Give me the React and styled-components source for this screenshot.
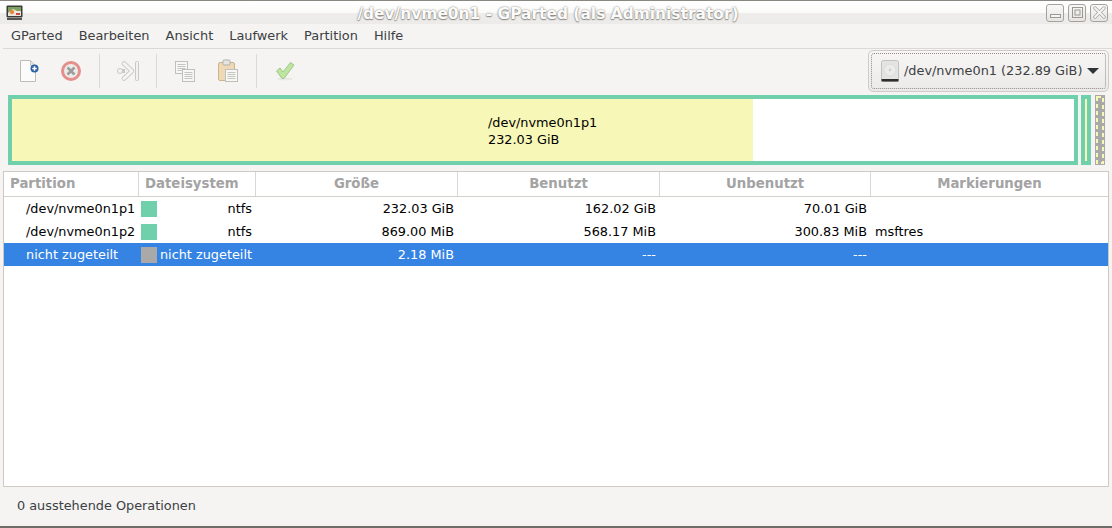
import React from 'react'
import styled, { createGlobalStyle, css } from 'styled-components'

const GlobalStyle = createGlobalStyle`
  html, body { margin:0; padding:0; background:#f5f4f2; }
  body { font-family:"DejaVu Sans", sans-serif; font-size:12.85px; }
`

const MENUS = ['GParted', 'Bearbeiten', 'Ansicht', 'Laufwerk', 'Partition', 'Hilfe']

const HEADERS = [
  { label: 'Partition', align: 'left' },
  { label: 'Dateisystem', align: 'left' },
  { label: 'Größe', align: 'center' },
  { label: 'Benutzt', align: 'center' },
  { label: 'Unbenutzt', align: 'center' },
  { label: 'Markierungen', align: 'center' },
]

const ROWS = [
  { name: '/dev/nvme0n1p1', color: '#70d0ac', fs: 'ntfs', size: '232.03 GiB', used: '162.02 GiB', free: '70.01 GiB', flags: '' },
  { name: '/dev/nvme0n1p2', color: '#70d0ac', fs: 'ntfs', size: '869.00 MiB', used: '568.17 MiB', free: '300.83 MiB', flags: 'msftres' },
  { name: 'nicht zugeteilt', color: '#a9a9a9', fs: 'nicht zugeteilt', size: '2.18 MiB', used: '---', free: '---', flags: '', selected: true },
]

const gridColumns = css`
  display:grid;
  grid-template-columns:135px 117px 202px 202px 211px 1fr;
`

const Window = styled.div`
  width:1112px;
  height:528px;
  box-sizing:border-box;
  border-top:1px solid #8a8680;
  border-bottom:2px solid #6f6c68;
  display:flex;
  flex-direction:column;
  overflow:hidden;
  background:#f5f4f2;
`

const TitleBar = styled.div`
  height:23px;
  flex:none;
  display:flex;
  align-items:center;
  padding:0 4px 0 6px;
  background:linear-gradient(#ffffff 0%, #fbfbfa 50%, #eeedeb 52%, #ecebe9 100%);
`

const Title = styled.div`
  flex:1;
  text-align:center;
  font-weight:bold;
  font-size:15.45px;
  color:#fbfbfb;
  padding:2px 0 0 27px;
  white-space:nowrap;
  text-shadow:0 0 2px #77736d, 0 1px 1px #99958f;
`

const WinButtons = styled.div`
  display:flex;
  gap:4px;
`

const WinButton = styled.div`
  width:18px;
  height:18px;
  box-sizing:border-box;
  border:1px solid #a5a29c;
  border-radius:3px;
  background:linear-gradient(#f8f8f7, #e6e5e2);
  display:flex;
  align-items:center;
  justify-content:center;
`

const MenuBar = styled.div`
  height:24px;
  box-sizing:border-box;
  flex:none;
  display:flex;
  align-items:center;
  padding:0 0 2px 3px;
  color:#3c4043;
  font-size:12.92px;
`

const MenuItem = styled.div`
  padding:0 8px;
`

const Toolbar = styled.div`
  height:43px;
  flex:none;
  margin-left:3px;
  border-top:1px solid #dbd9d5;
  display:flex;
  align-items:center;
  padding-left:5px;
`

const ToolButton = styled.div`
  width:${p => (p.$wide ? 43 : 42)}px;
  height:42px;
  display:flex;
  align-items:center;
  justify-content:center;
`

const Separator = styled.div`
  width:1px;
  height:34px;
  margin:0 7px;
  background:#dcdad6;
`

const DiskSelect = styled.div`
  margin-left:auto;
  margin-right:3px;
  width:241px;
  height:42px;
  box-sizing:border-box;
  border:1px solid #cfccc7;
  border-radius:5px;
  background:linear-gradient(#f7f6f5, #ebeae8);
  padding:2px;
`

const DiskSelectInner = styled.div`
  height:100%;
  box-sizing:border-box;
  border:1px dotted #8f8c87;
  border-radius:3px;
  display:flex;
  align-items:center;
  padding:0 7px 0 9px;
  gap:5px;
  color:#3c4043;
  white-space:nowrap;
`

const Arrow = styled.div`
  margin-left:auto;
  width:0;
  height:0;
  border-left:6px solid transparent;
  border-right:6px solid transparent;
  border-top:6px solid #2e3436;
`

const DiskMap = styled.div`
  height:70px;
  flex:none;
  margin:3px 7px 0 8px;
  display:flex;
  gap:3px;
`

const MapPartition = styled.div`
  box-sizing:border-box;
  height:100%;
  width:${p => p.$width}px;
  border:4px solid #70d0ac;
  background:#fff;
  position:relative;
`

const UsedPart = styled.div`
  width:${p => p.$width}px;
  height:100%;
  background:#f7f7b8;
`

/* the label sits over the partition bar, centred on the whole partition */
const MapLabel = styled.div`
  position:absolute;
  top:calc(50% + 1px);
  left:50%;
  transform:translate(-50%, -50%);
  width:110px;
  color:#000;
  line-height:17px;
  white-space:nowrap;
`

const ThinPartition = styled.div`
  box-sizing:border-box;
  width:10px;
  height:100%;
  background:#70d0ac;
  display:flex;
  justify-content:center;
  padding:4px 0;
`

const ThinCore = styled.div`
  width:2px;
  background:#f7f7b8;
`

const Unallocated = styled.div`
  width:10px;
  height:100%;
  margin-left:1px;
  background:#a9a9a9;
`

const TableBox = styled.div`
  flex:1;
  margin:6px 3px 0 3px;
  border:1px solid #cdc9c3;
  background:#fff;
  min-height:0;
`

const HeaderRow = styled.div`
  ${gridColumns}
  height:25px;
  box-sizing:border-box;
  border-bottom:1px solid #d4d1cc;
`

const HeaderCell = styled.div`
  font-weight:bold;
  font-size:13.3px;
  color:#a3a3a3;
  line-height:23px;
  text-align:${p => p.$align};
  padding-left:6px;
  padding-right:6px;
  border-right:1px solid #d9d7d3;
  &:last-child { border-right:none; }
`

const Row = styled.div`
  ${gridColumns}
  height:23px;
  line-height:23px;
  color:${p => (p.$selected ? '#fff' : '#000')};
  background:${p => (p.$selected ? '#3584e4' : '#fff')};
`

const NameCell = styled.div`
  padding-left:22px;
  white-space:nowrap;
`

const FsCell = styled.div`
  display:flex;
  align-items:center;
  padding-left:2px;
  padding-right:4px;
`

const Swatch = styled.div`
  width:16px;
  height:16px;
  flex:none;
  background:${p => p.$color};
`

const FsName = styled.div`
  margin-left:auto;
  white-space:nowrap;
`

const NumCell = styled.div`
  text-align:right;
  padding-right:4px;
`

const FlagCell = styled.div`
  padding-left:4px;
`

const StatusBar = styled.div`
  height:39px;
  box-sizing:border-box;
  flex:none;
  display:flex;
  align-items:center;
  padding:0 0 3px 17px;
  color:#3c4043;
`

function AppIcon() {
  return (
    <svg width="17" height="15" viewBox="0 0 17 15" style={{ flex: 'none' }}>
      <rect x="0.5" y="0.5" width="16" height="12" rx="1" fill="#3a3a36" />
      <rect x="2" y="2" width="13" height="9" fill="#7fa05f" />
      <path d="M2 8 L7 4 L11 6 L15 6 L15 11 L2 11Z" fill="#e8e6df" />
      <circle cx="6" cy="7" r="2.2" fill="#e88a3c" />
      <rect x="10" y="8" width="4" height="2" fill="#c94b3b" />
      <rect x="1" y="13" width="15" height="2" fill="#55544f" />
    </svg>
  )
}

function MinIcon() {
  return (
    <svg width="11" height="11" viewBox="0 0 11 11">
      <rect x="0.5" y="7.5" width="10" height="3" fill="#f4f4f2" stroke="#9b9891" />
    </svg>
  )
}

function MaxIcon() {
  return (
    <svg width="11" height="11" viewBox="0 0 11 11">
      <rect x="0.5" y="0.5" width="10" height="10" fill="none" stroke="#9b9891" />
      <rect x="3" y="3" width="5" height="5" fill="none" stroke="#9b9891" />
    </svg>
  )
}

function CloseIcon() {
  return (
    <svg width="13" height="13" viewBox="0 0 13 13">
      <path d="M2 2 L11 11 M11 2 L2 11" stroke="#a9a6a0" strokeWidth="3.4" strokeLinecap="round" />
      <path d="M2 2 L11 11 M11 2 L2 11" stroke="#f6f6f5" strokeWidth="1.8" strokeLinecap="round" />
    </svg>
  )
}

function NewIcon() {
  return (
    <svg width="24" height="24" viewBox="0 0 24 24">
      <path d="M3.5 1.5 H13.5 L18.5 6.5 V22.5 H3.5Z" fill="#fbfbfb" stroke="#bcbcb8" />
      <path d="M13.5 1.5 V6.5 H18.5Z" fill="#e4e4e2" stroke="#c8c8c4" />
      <circle cx="17.5" cy="9.5" r="4" fill="#2f62a3" />
      <path d="M15.3 9.5 H19.7 M17.5 7.3 V11.7" stroke="#fff" strokeWidth="1.5" />
    </svg>
  )
}

function DeleteIcon() {
  return (
    <svg width="22" height="22" viewBox="0 0 22 22">
      <circle cx="11" cy="11" r="8.5" fill="#ececea" stroke="#e38f8c" strokeWidth="3" />
      <path d="M7.5 7.5 L14.5 14.5 M14.5 7.5 L7.5 14.5" stroke="#9c9c9a" strokeWidth="2.6" />
    </svg>
  )
}

function UndoIcon() {
  return (
    <svg width="24" height="22" viewBox="0 0 24 22">
      <path d="M5 11 H9" stroke="#c8c8c5" strokeWidth="4" />
      <circle cx="4" cy="11" r="2.5" fill="#f4f4f3" stroke="#c8c8c5" />
      <path d="M8 3.5 L16 11 L8 18.5" fill="none" stroke="#c8c8c5" strokeWidth="4.6" strokeLinejoin="round" strokeLinecap="round" />
      <path d="M8 3.5 L16 11 L8 18.5" fill="none" stroke="#f5f5f4" strokeWidth="2.8" strokeLinejoin="round" strokeLinecap="round" />
      <rect x="19.5" y="1.5" width="3" height="19" rx="1" fill="#f2f2f1" stroke="#c8c8c5" />
    </svg>
  )
}

function PageLines({ x, y, w, h }) {
  return (
    <g>
      <rect x={x + 0.5} y={y + 0.5} width={w} height={h} fill="#f7f7f6" stroke="#bfbfbb" />
      {[3, 5, 7, 9, 11].filter(d => d < h - 1).map(d => (
        <path key={d} d={`M${x + 2.5} ${y + d + 0.5} H${x + w - 1.5}`} stroke="#c4c4c0" />
      ))}
    </g>
  )
}

function CopyIcon() {
  return (
    <svg width="22" height="22" viewBox="0 0 22 22">
      <PageLines x={1} y={1} w={12} h={12} />
      <PageLines x={8} y={9} w={12} h={12} />
    </svg>
  )
}

function PasteIcon() {
  return (
    <svg width="22" height="24" viewBox="0 0 22 24">
      <rect x="1.5" y="3.5" width="16" height="18" rx="1.5" fill="#efd9b4" stroke="#cdb48c" />
      <rect x="6" y="1" width="7" height="5" rx="1" fill="#e4e4e2" stroke="#b0b0ac" />
      <PageLines x={8} y={10} w={12} h={12} />
    </svg>
  )
}

function ApplyIcon() {
  return (
    <svg width="22" height="22" viewBox="0 0 22 22">
      <ellipse cx="11" cy="19" rx="8" ry="1.5" fill="#e9e8e6" />
      <path d="M2.5 11 L6 8 L9 12 L16.5 2.5 L20 5 L10 18.5 L8 18.5Z" fill="#bfe3a0" stroke="#9cc985" strokeLinejoin="round" />
    </svg>
  )
}

function DiskIcon() {
  return (
    <svg width="18" height="22" viewBox="0 0 18 22" style={{ flex: 'none' }}>
      <rect x="0.5" y="0.5" width="17" height="21" rx="2" fill="#e4e4e2" stroke="#c0c0bc" />
      <circle cx="9" cy="10" r="6" fill="#ececea" stroke="#dcdcd9" />
      <circle cx="9" cy="10" r="1.4" fill="#d2d2cf" />
      <rect x="0.5" y="19" width="17" height="2.5" fill="#2e2e2c" />
    </svg>
  )
}

function UnallocatedDashes() {
  return (
    <svg width="10" height="70" viewBox="0 0 10 70" style={{ display: 'block' }}>
      <rect x="2" y="2" width="6" height="66" fill="none" stroke="#f7f7b8" strokeWidth="2" strokeDasharray="4 3" />
    </svg>
  )
}

export default function App() {
  return (
    <>
      <GlobalStyle />
      <Window>
        <TitleBar>
          <AppIcon />
          <Title>/dev/nvme0n1 - GParted (als Administrator)</Title>
          <WinButtons>
            <WinButton><MinIcon /></WinButton>
            <WinButton><MaxIcon /></WinButton>
            <WinButton><CloseIcon /></WinButton>
          </WinButtons>
        </TitleBar>

        <MenuBar>
          {MENUS.map(m => <MenuItem key={m}>{m}</MenuItem>)}
        </MenuBar>

        <Toolbar>
          <ToolButton><NewIcon /></ToolButton>
          <ToolButton><DeleteIcon /></ToolButton>
          <Separator />
          <ToolButton><UndoIcon /></ToolButton>
          <Separator />
          <ToolButton><CopyIcon /></ToolButton>
          <ToolButton $wide><PasteIcon /></ToolButton>
          <Separator />
          <ToolButton><ApplyIcon /></ToolButton>
          <DiskSelect>
            <DiskSelectInner>
              <DiskIcon />
              /dev/nvme0n1 (232.89 GiB)
              <Arrow />
            </DiskSelectInner>
          </DiskSelect>
        </Toolbar>

        <DiskMap>
          <MapPartition $width={1070}>
            <UsedPart $width={741} />
            <MapLabel>/dev/nvme0n1p1<br />232.03 GiB</MapLabel>
          </MapPartition>
          <ThinPartition><ThinCore /></ThinPartition>
          <Unallocated><UnallocatedDashes /></Unallocated>
        </DiskMap>

        <TableBox>
          <HeaderRow>
            {HEADERS.map(h => <HeaderCell key={h.label} $align={h.align}>{h.label}</HeaderCell>)}
          </HeaderRow>
          {ROWS.map(r => (
            <Row key={r.name} $selected={r.selected}>
              <NameCell>{r.name}</NameCell>
              <FsCell>
                <Swatch $color={r.color} />
                <FsName>{r.fs}</FsName>
              </FsCell>
              <NumCell>{r.size}</NumCell>
              <NumCell>{r.used}</NumCell>
              <NumCell>{r.free}</NumCell>
              <FlagCell>{r.flags}</FlagCell>
            </Row>
          ))}
        </TableBox>

        <StatusBar>0 ausstehende Operationen</StatusBar>
      </Window>
    </>
  )
}
